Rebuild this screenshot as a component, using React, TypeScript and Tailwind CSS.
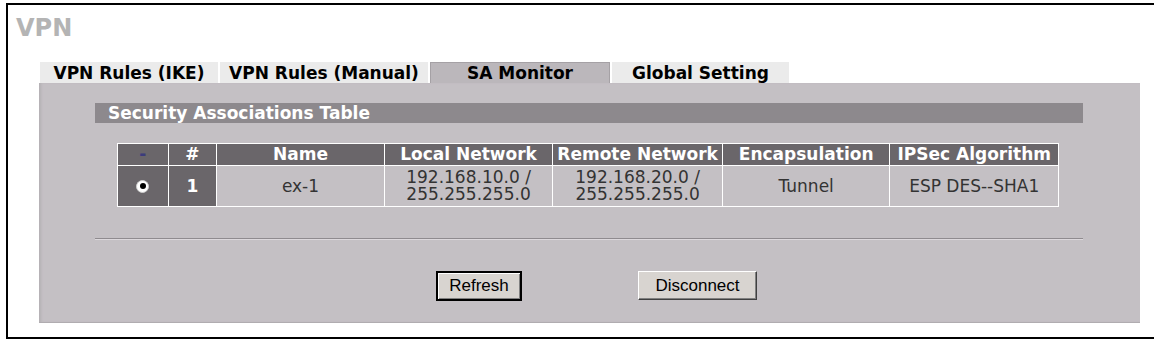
import React from "react";

const cols = [
  { label: "-", w: "w-[50px]" },
  { label: "#", w: "w-[48px]" },
  { label: "Name", w: "w-[168px]" },
  { label: "Local Network", w: "w-[169px]" },
  { label: "Remote Network", w: "w-[170px]" },
  { label: "Encapsulation", w: "w-[168px]" },
  { label: "IPSec Algorithm", w: "w-[169px]" },
];

export default function App() {
  return (
    <div className="w-[1154px] h-[340px] bg-white overflow-hidden pt-[3px] pl-[6px] font-['DejaVu_Sans',sans-serif]">
      <div className="w-[1160px] h-[336px] border-l-2 border-t-2 border-b-2 border-black">
        {/* TITLE */}
        <div className="pl-[8px] pt-[9px] h-[57px] text-[24px] font-bold text-[#b4b4b4] leading-[28px]">
          VPN
        </div>

        {/* TABS */}
        <div className="flex gap-[2px] pl-[32px] h-[21px] text-[17px] font-bold text-black leading-[22px]">
          <div className="w-[178px] bg-[#ebebeb] text-center">VPN Rules (IKE)</div>
          <div className="w-[208px] bg-[#ebebeb] text-center">VPN Rules (Manual)</div>
          <div className="w-[180px] bg-[#bbb7bb] border border-b-0 border-[#a5a1a5] text-center leading-[20px]">SA Monitor</div>
          <div className="w-[177px] bg-[#ebebeb] text-center">Global Setting</div>
        </div>

        {/* PANEL */}
        <div className="ml-[31px] w-[1101px] h-[240px] bg-[#c4c0c4] border-b border-[#b0acb0] shadow-[inset_3px_0_3px_-1px_#b4b0b4] pt-[20px] pl-[56px]">
          <div className="w-[988px] h-[20px] bg-[#8d898d] text-white font-bold text-[17px] leading-[20px] pl-[13px]">
            Security Associations Table
          </div>

          <div className="ml-[22px] mt-[20px] w-[942px] border border-white bg-white">
            <div className="flex gap-px">
              {cols.map((c) => (
                <div
                  key={c.label}
                  className={`${c.w} h-[21px] bg-[#6a666a] text-center font-bold text-[17px] leading-[21px] whitespace-nowrap ${c.label === "-" ? "text-[#3c3c7c]" : "text-white"}`}
                >
                  {c.label}
                </div>
              ))}
            </div>
            <div className="flex gap-px mt-px text-[17px] text-[#333333] leading-[17px]">
              <div className="w-[50px] h-[40px] bg-[#6a666a] flex items-center justify-center">
                <div className="w-[13px] h-[13px] rounded-full bg-white border border-[#d0d0d0] flex items-center justify-center">
                  <div className="w-[6px] h-[6px] rounded-full bg-black" />
                </div>
              </div>
              <div className="w-[48px] h-[40px] bg-[#6a666a] flex items-center justify-center text-white font-bold">
                1
              </div>
              <div className="w-[168px] h-[40px] bg-[#c4c0c4] flex items-center justify-center">ex-1</div>
              <div className="w-[169px] h-[40px] bg-[#c4c0c4] flex flex-col items-center justify-center">
                <span>192.168.10.0 /</span>
                <span>255.255.255.0</span>
              </div>
              <div className="w-[170px] h-[40px] bg-[#c4c0c4] flex flex-col items-center justify-center">
                <span>192.168.20.0 /</span>
                <span>255.255.255.0</span>
              </div>
              <div className="w-[168px] h-[40px] bg-[#c4c0c4] flex items-center justify-center">Tunnel</div>
              <div className="w-[169px] h-[40px] bg-[#c4c0c4] flex items-center justify-center">ESP DES--SHA1</div>
            </div>
          </div>

          {/* RULE */}
          <div className="mt-[31px] w-[988px] border-t border-[#8f8b8f] border-b border-b-[#dcd8dc]" />

          {/* BUTTONS */}
          <div className="flex mt-[31px] pl-[341px] gap-[116px] font-['Liberation_Sans',sans-serif] text-[17px] text-black">
            <button className="w-[86px] h-[30px] bg-[#d8d4d0] border-2 border-black shadow-[inset_1px_1px_0_#ffffff,inset_-1px_-1px_0_#808080]">
              Refresh
            </button>
            <button className="w-[119px] h-[29px] bg-[#d8d4d0] border border-t-white border-l-white border-r-[#404040] border-b-[#404040] shadow-[inset_-1px_-1px_0_#808080]">
              Disconnect
            </button>
          </div>
        </div>
      </div>
    </div>
  );
}
